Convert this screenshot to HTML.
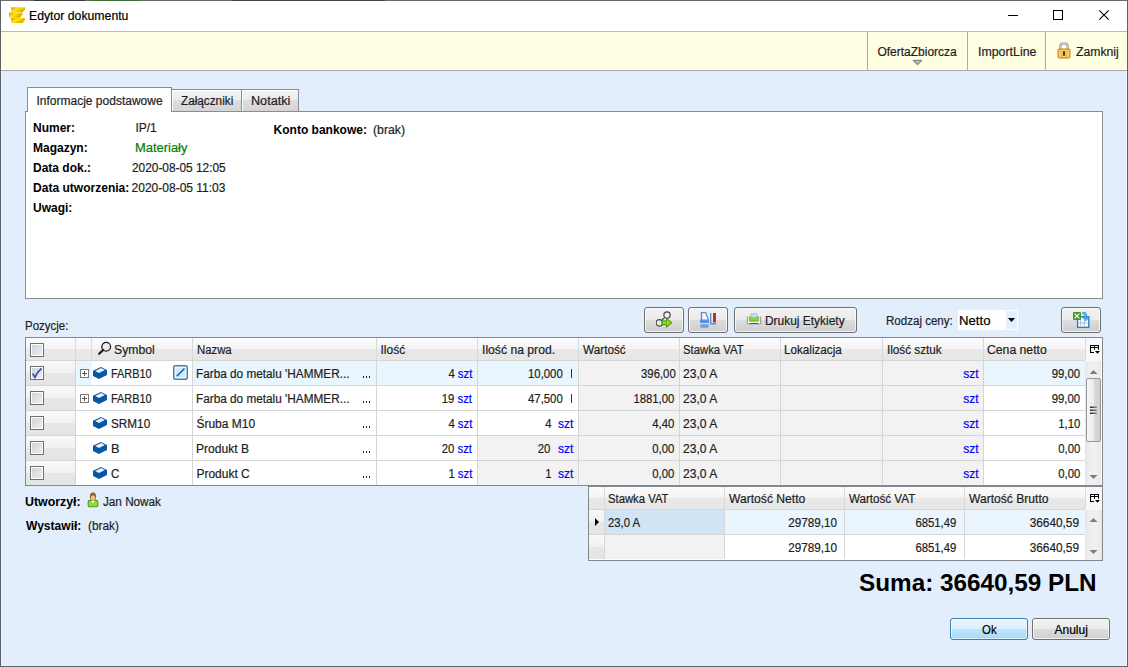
<!DOCTYPE html>
<html><head><meta charset="utf-8"><style>
html,body{margin:0;padding:0}
body{width:1128px;height:667px;overflow:hidden;position:relative;font-family:"Liberation Sans",sans-serif;font-size:12px}
.t{position:absolute;line-height:14px;white-space:nowrap;-webkit-text-stroke:0.2px currentColor}
.b{font-weight:bold;-webkit-text-stroke:0}
</style></head><body>
<div style="position:absolute;left:0px;top:0px;width:1128px;height:667px;background:#e3eefd"></div>
<div style="position:absolute;left:0px;top:1px;width:1128px;height:30px;background:#fff"></div>
<div style="position:absolute;left:0px;top:31px;width:1128px;height:1px;background:#b9b9b9"></div>
<div style="position:absolute;left:0px;top:32px;width:1128px;height:38px;background:#fefee3"></div>
<div style="position:absolute;left:0px;top:70px;width:1128px;height:1px;background:#aaaaaa"></div>
<div style="position:absolute;left:0px;top:0px;width:1128px;height:1px;background:#6a6a6a"></div>
<div style="position:absolute;left:34px;top:0px;width:51px;height:1px;background:#3a3a3a"></div>
<div style="position:absolute;left:90px;top:0px;width:50px;height:1px;background:#3f6f3f"></div>
<div style="position:absolute;left:232px;top:0px;width:153px;height:1px;background:#444"></div>
<div style="position:absolute;left:0px;top:0px;width:1px;height:667px;background:#5e6166"></div>
<div style="position:absolute;left:1127px;top:0px;width:1px;height:667px;background:#5e6166"></div>
<div style="position:absolute;left:0px;top:666px;width:1128px;height:1px;background:#5e6166"></div>
<div style="position:absolute;left:1126px;top:71px;width:1px;height:595px;background:#ecf4ff"></div>
<div style="position:absolute;left:1px;top:665px;width:1126px;height:1px;background:#ecf4ff"></div>
<svg style="position:absolute;left:9px;top:7px" width="16" height="16" viewBox="0 0 16 16">
<defs><linearGradient id="gc" x1="0" y1="0" x2="1" y2="0.6"><stop offset="0" stop-color="#d89600"/><stop offset="0.45" stop-color="#ffe800"/><stop offset="1" stop-color="#e0a000"/></linearGradient></defs>
<path d="M2 0.3 H16 V2.5 L13.5 5.3 H2.3 Z" fill="url(#gc)"/>
<path d="M0 5.5 H13.5 V7.3 L10.8 10.8 H0 Z" fill="url(#gc)"/>
<path d="M2 11 H16 V12.8 L13.5 16 H2.3 Z" fill="url(#gc)"/>
</svg>
<div class="t" id="t0" style="left:29.38px;top:9px;transform:scaleX(1.0208);transform-origin:0 0;color:#000">Edytor dokumentu</div>
<div style="position:absolute;left:1008px;top:15px;width:10px;height:1px;background:#000"></div>
<div style="position:absolute;left:1053px;top:10px;width:8px;height:8px;border:1px solid #000"></div>
<svg style="position:absolute;left:1098px;top:9px" width="12" height="12" viewBox="0 0 12 12"><path d="M1.3 1.3 L10.7 10.7 M10.7 1.3 L1.3 10.7" stroke="#000" stroke-width="1.1"/></svg>
<div style="position:absolute;left:867px;top:32px;width:1px;height:38px;background:#a9a9a9"></div>
<div style="position:absolute;left:967px;top:32px;width:1px;height:38px;background:#a9a9a9"></div>
<div style="position:absolute;left:1045px;top:32px;width:1px;height:38px;background:#a9a9a9"></div>
<div class="t" id="t1" style="left:877.40px;top:45px;color:#1e1e1e">OfertaZbiorcza</div>
<svg style="position:absolute;left:912px;top:59px" width="11" height="7" viewBox="0 0 11 7"><path d="M1.5 1.5 H9.5 L5.5 5.5 Z" fill="#d0d0d0" stroke="#8c8c8c" stroke-width="1.3" stroke-linejoin="round"/></svg>
<div class="t" id="t2" style="left:977.57px;top:45px;transform:scaleX(1.0309);transform-origin:0 0;color:#1e1e1e">ImportLine</div>
<svg style="position:absolute;left:1057px;top:42px" width="14" height="17" viewBox="0 0 14 17">
<path d="M3.3 7.5 V4.6 Q3.3 1.3 7 1.3 Q10.7 1.3 10.7 4.6 V7.5" fill="none" stroke="#9ca2ae" stroke-width="2.3"/>
<path d="M3.3 7.5 V4.6 Q3.3 1.3 7 1.3 Q10.7 1.3 10.7 4.6 V7.5" fill="none" stroke="#dde1e8" stroke-width="0.7"/>
<rect x="1" y="7" width="12" height="9" rx="1.2" fill="#f2b43a" stroke="#c98312" stroke-width="1"/>
<rect x="2.2" y="8.2" width="9.6" height="6.6" fill="#ffdc80"/>
<path d="M3 9.8 H5.8 M3 11.8 H5.8 M3 13.8 H5.8 M8.2 9.8 H11 M8.2 11.8 H11 M8.2 13.8 H11" stroke="#dc9a2a" stroke-width="0.9"/>
<rect x="6.1" y="9.2" width="1.8" height="4.6" fill="#3a2600"/>
</svg>
<div class="t" id="t3" style="left:1075.50px;top:45px;transform:scaleX(1.0171);transform-origin:0 0;color:#1e1e1e">Zamknij</div>
<div style="position:absolute;left:171px;top:89px;width:69px;height:21px;border:1px solid #898c95;border-bottom:none;box-shadow:inset 1px 1px 0 #fff;background:linear-gradient(#f3f3f3 0,#ebebeb 50%,#dddddd 50%,#d4d4d4 100%)"></div>
<div style="position:absolute;left:241px;top:89px;width:56px;height:21px;border:1px solid #898c95;border-bottom:none;box-shadow:inset 1px 1px 0 #fff;background:linear-gradient(#f3f3f3 0,#ebebeb 50%,#dddddd 50%,#d4d4d4 100%)"></div>
<div style="position:absolute;left:25px;top:111px;width:1076px;height:186px;border:1px solid #898c95;background:#fff"></div>
<div style="position:absolute;left:27px;top:87px;width:143px;height:24px;border:1px solid #898c95;border-bottom:none;background:#fff"></div>
<div class="t" id="t4" style="left:36.50px;top:94px;color:#1e1e1e">Informacje podstawowe</div>
<div class="t" id="t5" style="left:180.60px;top:94px;transform:scaleX(0.9792);transform-origin:0 0;color:#1e1e1e">Załączniki</div>
<div class="t" id="t6" style="left:250.75px;top:94px;transform:scaleX(1.0528);transform-origin:0 0;color:#1e1e1e">Notatki</div>
<div class="t" id="t7" style="left:33.00px;top:121px;font-weight:bold;color:#000;-webkit-text-stroke:0">Numer:</div>
<div class="t" id="t8" style="left:135.40px;top:121px;color:#1e1e1e">IP/1</div>
<div class="t" id="t9" style="left:33.00px;top:141px;font-weight:bold;color:#000;-webkit-text-stroke:0">Magazyn:</div>
<div class="t" id="t10" style="left:135.32px;top:141px;transform:scaleX(1.0766);transform-origin:0 0;color:#008000">Materiały</div>
<div class="t" id="t11" style="left:33.00px;top:161px;font-weight:bold;color:#000;-webkit-text-stroke:0">Data dok.:</div>
<div class="t" id="t12" style="left:131.61px;top:161px;transform:scaleX(0.9892);transform-origin:0 0;color:#1e1e1e">2020-08-05 12:05</div>
<div class="t" id="t13" style="left:33.00px;top:181px;transform:scaleX(1.0032);transform-origin:0 0;font-weight:bold;color:#000;-webkit-text-stroke:0">Data utworzenia:</div>
<div class="t" id="t14" style="left:131.60px;top:181px;color:#1e1e1e">2020-08-05 11:03</div>
<div class="t" id="t15" style="left:33.00px;top:201px;font-weight:bold;color:#000;-webkit-text-stroke:0">Uwagi:</div>
<div class="t" id="t16" style="left:273.60px;top:123px;font-weight:bold;color:#000;-webkit-text-stroke:0">Konto bankowe:</div>
<div class="t" id="t17" style="left:373.28px;top:123px;transform:scaleX(1.0241);transform-origin:0 0;color:#1e1e1e">(brak)</div>
<div style="position:absolute;left:644px;top:307px;width:40px;height:26px;box-sizing:border-box;border:1px solid #707070;border-radius:3px;background:linear-gradient(#f2f2f2 0,#ebebeb 50%,#dddddd 50%,#cfcfcf 100%);box-shadow:inset 0 0 0 1px rgba(255,255,255,0.7)"></div>
<div style="position:absolute;left:688px;top:307px;width:40px;height:26px;box-sizing:border-box;border:1px solid #707070;border-radius:3px;background:linear-gradient(#f2f2f2 0,#ebebeb 50%,#dddddd 50%,#cfcfcf 100%);box-shadow:inset 0 0 0 1px rgba(255,255,255,0.7)"></div>
<div style="position:absolute;left:734px;top:307px;width:123px;height:26px;box-sizing:border-box;border:1px solid #707070;border-radius:3px;background:linear-gradient(#f2f2f2 0,#ebebeb 50%,#dddddd 50%,#cfcfcf 100%);box-shadow:inset 0 0 0 1px rgba(255,255,255,0.7)"></div>
<div style="position:absolute;left:1061px;top:307px;width:40px;height:26px;box-sizing:border-box;border:1px solid #707070;border-radius:3px;background:linear-gradient(#f2f2f2 0,#ebebeb 50%,#dddddd 50%,#cfcfcf 100%);box-shadow:inset 0 0 0 1px rgba(255,255,255,0.7)"></div>
<svg style="position:absolute;left:656px;top:311px" width="17" height="17" viewBox="0 0 17 17">
<circle cx="11" cy="4.1" r="3.2" fill="#e4e4e4" stroke="#4a4a4a" stroke-width="1.2"/>
<path d="M9.6 2.8 L12.4 5.4 M12.4 2.8 L9.6 5.4" stroke="#fff" stroke-width="0.9"/>
<circle cx="3.3" cy="11.9" r="3.2" fill="#e4e4e4" stroke="#4a4a4a" stroke-width="1.2"/>
<path d="M2.2 10.6 V13.2 M4.4 10.6 V13.2" stroke="#fff" stroke-width="0.9"/>
<path d="M5.5 9.5 L8.8 6.4" stroke="#4a4a4a" stroke-width="1.2"/>
<path d="M6 10 H10.5 V7.2 L16 11.8 L10.5 16.2 V13.6 H6 Z" fill="#8ad21e" stroke="#3c8c00" stroke-width="0.9" stroke-linejoin="round"/>
</svg>
<svg style="position:absolute;left:700px;top:312px" width="17" height="16" viewBox="0 0 17 16">
<path d="M0.8 0 H6.2 L9 7.6 V11 H0 V7.5 H0.8 Z" fill="#5f8fd8"/>
<path d="M2.2 1.2 H5.3 L7.7 7.5 H2.2 Z" fill="#f4f7fc"/>
<rect x="0" y="12.2" width="9" height="3.6" rx="1.8" fill="#6d9ce0"/>
<path d="M10.7 1 V11.9 H16" fill="none" stroke="#4f7fd0" stroke-width="1.2"/>
<rect x="13" y="1" width="3" height="9.4" fill="#c0302a"/>
</svg>
<svg style="position:absolute;left:746px;top:313px" width="16" height="14" viewBox="0 0 16 14">
<path d="M1.3 3.5 V11 H14.7 V3.5" fill="#f8f8f8" stroke="#8a8a8a" stroke-width="0.9"/>
<rect x="2.8" y="3" width="10.4" height="5.8" rx="1.6" fill="#7cc22a"/>
<rect x="3.5" y="5.5" width="9" height="1" fill="#a6dc54"/>
<rect x="5" y="0" width="6" height="4.6" fill="#bcdcfa" stroke="#8fb6e6" stroke-width="0.6"/>
<rect x="4.5" y="10.3" width="7" height="3" fill="#bcdcfa"/>
<rect x="4" y="10.2" width="8" height="0.9" fill="#333"/>
</svg>
<div class="t" id="t18" style="left:765.01px;top:314px;transform:scaleX(0.9949);transform-origin:0 0;color:#1e1e1e">Drukuj Etykiety</div>
<div class="t" id="t19" style="left:885.64px;top:314px;transform:scaleX(0.9627);transform-origin:0 0;color:#1e1e1e">Rodzaj ceny:</div>
<div style="position:absolute;left:958px;top:310px;width:60px;height:20px;background:#fff"></div>
<div style="position:absolute;left:1006px;top:311px;width:11px;height:18px;background:#e3eefd"></div>
<svg style="position:absolute;left:1008px;top:318px" width="7" height="4" viewBox="0 0 7 4"><path d="M0 0 H7 L3.5 4 Z" fill="#000"/></svg>
<div class="t" id="t20" style="left:959.40px;top:314px;transform:scaleX(1.0963);transform-origin:0 0;color:#000">Netto</div>
<svg style="position:absolute;left:1072px;top:311px" width="18" height="17" viewBox="0 0 18 17">
<rect x="5.6" y="5.7" width="11.2" height="10.6" fill="#fff" stroke="#1f7ac8" stroke-width="1.3"/>
<path d="M8.8 9 V15 M12.3 9 V15 M7 12 H15.5" stroke="#8fbbe8" stroke-width="1"/>
<rect x="1" y="1" width="8" height="8" rx="0.8" fill="#3e9a2a"/>
<path d="M2.6 2.6 L7.4 7.4 M7.4 2.6 L2.6 7.4" stroke="#fff" stroke-width="1.2"/>
<path d="M10.3 2 Q13.8 1.8 13.8 4.8 V6.8" fill="none" stroke="#2d82c8" stroke-width="2.6"/>
<path d="M10.3 2 Q13.8 1.8 13.8 4.8 V6.8" fill="none" stroke="#6cbcf0" stroke-width="1.3"/>
<path d="M10.2 6.2 H17.4 L13.8 10 Z" fill="#5aaeea" stroke="#2d82c8" stroke-width="0.6"/>
</svg>
<div class="t" id="t21" style="left:24.64px;top:319px;transform:scaleX(0.9558);transform-origin:0 0;color:#1e1e1e">Pozycje:</div>
<div style="position:absolute;left:25px;top:337px;width:1078px;height:149px;background:#fff;box-sizing:border-box;border:1px solid #828790"></div>
<div style="position:absolute;left:26px;top:338px;width:1059px;height:22px;background:linear-gradient(#fbfbfb 0,#f4f4f4 50%,#e9e9e9 50%,#e6e6e6 100%)"></div>
<div style="position:absolute;left:1085px;top:338px;width:16px;height:23px;background:#f8f8f8"></div>
<div style="position:absolute;left:26px;top:360px;width:1059px;height:1px;background:#d5d5d5"></div>
<div style="position:absolute;left:75px;top:338px;width:1px;height:22px;background:#dadada"></div>
<div style="position:absolute;left:91px;top:338px;width:1px;height:22px;background:#dadada"></div>
<div style="position:absolute;left:192px;top:338px;width:1px;height:22px;background:#dadada"></div>
<div style="position:absolute;left:376px;top:338px;width:1px;height:22px;background:#dadada"></div>
<div style="position:absolute;left:477px;top:338px;width:1px;height:22px;background:#dadada"></div>
<div style="position:absolute;left:578px;top:338px;width:1px;height:22px;background:#dadada"></div>
<div style="position:absolute;left:679px;top:338px;width:1px;height:22px;background:#dadada"></div>
<div style="position:absolute;left:780px;top:338px;width:1px;height:22px;background:#dadada"></div>
<div style="position:absolute;left:882px;top:338px;width:1px;height:22px;background:#dadada"></div>
<div style="position:absolute;left:983px;top:338px;width:1px;height:22px;background:#dadada"></div>
<div style="position:absolute;left:1085px;top:338px;width:1px;height:22px;background:#dadada"></div>
<svg style="position:absolute;left:97px;top:341px" width="16" height="16" viewBox="0 0 16 16"><circle cx="9.2" cy="5.7" r="4.4" fill="#ececec" stroke="#1e1e1e" stroke-width="1.3"/><path d="M6.1 9 L2.2 12.8" stroke="#1e1e1e" stroke-width="2.3" stroke-linecap="round"/></svg>
<div class="t" id="t22" style="left:114.38px;top:343px;transform:scaleX(1.0158);transform-origin:0 0;color:#1e1e1e">Symbol</div>
<div class="t" id="t23" style="left:196.66px;top:343px;transform:scaleX(0.9444);transform-origin:0 0;color:#1e1e1e">Nazwa</div>
<div class="t" id="t24" style="left:380.50px;top:343px;color:#1e1e1e">Ilość</div>
<div class="t" id="t25" style="left:481.59px;top:343px;transform:scaleX(1.0143);transform-origin:0 0;color:#1e1e1e">Ilość na prod.</div>
<div class="t" id="t26" style="left:583.30px;top:343px;transform:scaleX(0.9814);transform-origin:0 0;color:#1e1e1e">Wartość</div>
<div class="t" id="t27" style="left:683.26px;top:343px;transform:scaleX(0.9429);transform-origin:0 0;color:#1e1e1e">Stawka VAT</div>
<div class="t" id="t28" style="left:784.33px;top:343px;transform:scaleX(0.9724);transform-origin:0 0;color:#1e1e1e">Lokalizacja</div>
<div class="t" id="t29" style="left:886.72px;top:343px;transform:scaleX(0.9764);transform-origin:0 0;color:#1e1e1e">Ilość sztuk</div>
<div class="t" id="t30" style="left:986.98px;top:343px;transform:scaleX(1.0175);transform-origin:0 0;color:#1e1e1e">Cena netto</div>
<svg style="position:absolute;left:1089px;top:344px" width="12" height="11" viewBox="0 0 12 11"><path d="M1 1.5 H10 M1 3.5 H10 M1.5 1 V9 M1 8.5 H5 M5.5 1 V5.8 M9.5 1 V5.8" fill="none" stroke="#000" stroke-width="1"/><path d="M6 7 H11 L8.5 9.8 Z" fill="#000"/></svg>
<div style="position:absolute;left:30px;top:343px;width:12px;height:12px;border:1px solid #707070;box-shadow:inset 0 0 0 1px #fff;background:linear-gradient(135deg,#cdd1d6 0,#eef0f2 100%)"></div>
<div style="position:absolute;left:26px;top:361px;width:49px;height:24px;background:linear-gradient(#f9f9f9 0,#f1f1f1 50%,#e7e7e7 50%,#e4e4e4 100%)"></div>
<div style="position:absolute;left:76px;top:361px;width:16px;height:24px;background:#eaf6fd"></div>
<div style="position:absolute;left:92px;top:361px;width:100px;height:24px;background:#fff"></div>
<div style="position:absolute;left:193px;top:361px;width:183px;height:24px;background:#eaf6fd"></div>
<div style="position:absolute;left:377px;top:361px;width:100px;height:24px;background:#eaf6fd"></div>
<div style="position:absolute;left:478px;top:361px;width:100px;height:24px;background:#eaf6fd"></div>
<div style="position:absolute;left:579px;top:361px;width:100px;height:24px;background:#f2f2f2"></div>
<div style="position:absolute;left:680px;top:361px;width:100px;height:24px;background:#f2f2f2"></div>
<div style="position:absolute;left:781px;top:361px;width:101px;height:24px;background:#f2f2f2"></div>
<div style="position:absolute;left:883px;top:361px;width:100px;height:24px;background:#f2f2f2"></div>
<div style="position:absolute;left:984px;top:361px;width:101px;height:24px;background:#eaf6fd"></div>
<div style="position:absolute;left:75px;top:361px;width:1px;height:24px;background:#d5d5d5"></div>
<div style="position:absolute;left:192px;top:361px;width:1px;height:24px;background:#d5d5d5"></div>
<div style="position:absolute;left:376px;top:361px;width:1px;height:24px;background:#d5d5d5"></div>
<div style="position:absolute;left:477px;top:361px;width:1px;height:24px;background:#d5d5d5"></div>
<div style="position:absolute;left:578px;top:361px;width:1px;height:24px;background:#d5d5d5"></div>
<div style="position:absolute;left:679px;top:361px;width:1px;height:24px;background:#d5d5d5"></div>
<div style="position:absolute;left:780px;top:361px;width:1px;height:24px;background:#d5d5d5"></div>
<div style="position:absolute;left:882px;top:361px;width:1px;height:24px;background:#d5d5d5"></div>
<div style="position:absolute;left:983px;top:361px;width:1px;height:24px;background:#d5d5d5"></div>
<div style="position:absolute;left:26px;top:385px;width:1059px;height:1px;background:#d5d5d5"></div>
<div style="position:absolute;left:30px;top:366px;width:12px;height:12px;border:1px solid #707070;box-shadow:inset 0 0 0 1px #fff;background:linear-gradient(135deg,#cdd1d6 0,#eef0f2 100%)"></div>
<svg style="position:absolute;left:30px;top:366px" width="14" height="14" viewBox="0 0 14 14"><path d="M2.6 7.6 Q3.8 8.8 4.9 11.3 Q7.5 5.5 11.6 2.3" fill="none" stroke="#3a50a4" stroke-width="1.7"/></svg>
<svg style="position:absolute;left:80px;top:369px" width="9" height="9" viewBox="0 0 9 9"><rect x="0.5" y="0.5" width="8" height="8" fill="#fff" stroke="#7a7a7a"/><path d="M2 4.5 H7 M4.5 2 V7" stroke="#5a5a5a" stroke-width="1"/></svg>
<svg style="position:absolute;left:93px;top:367px" width="15" height="13" viewBox="0 0 15 13"><path d="M0 3.7 L7.9 0 L14 2.9 V7.9 L5.9 12 L0 8.9 Z" fill="#0756a8"/><path d="M2.1 4.1 L8.1 1.1 L11.9 2.9 L6 6.1 Z" fill="#f1f1f1"/></svg>
<div class="t" id="t31" style="left:111.39px;top:367px;transform:scaleX(0.9093);transform-origin:0 0;color:#1e1e1e">FARB10</div>
<svg style="position:absolute;left:173px;top:365px" width="15" height="15" viewBox="0 0 15 15"><rect x="0.75" y="0.75" width="13.5" height="13.5" rx="1.5" fill="#fff" stroke="#3b80c4" stroke-width="1.5"/><rect x="2.5" y="2.5" width="10" height="10" fill="#d3e9fb"/><path d="M3.8 11.2 L11.5 3.5" stroke="#1f67b0" stroke-width="1.7"/></svg>
<div class="t" id="t32" style="left:196.42px;top:367px;transform:scaleX(0.9818);transform-origin:0 0;color:#1e1e1e">Farba do metalu 'HAMMER...</div>
<div style="position:absolute;left:362.5px;top:376px;width:1.5px;height:2px;background:#1e1e1e"></div>
<div style="position:absolute;left:365.5px;top:376px;width:1.5px;height:2px;background:#1e1e1e"></div>
<div style="position:absolute;left:368.5px;top:376px;width:1.5px;height:2px;background:#1e1e1e"></div>
<div class="t" id="t33" style="right:655.60px;top:367px;transform:scaleX(0.9450);transform-origin:100% 0;color:#1e1e1e">4 <span style="color:#0000ff">szt</span></div>
<div class="t" id="t34" style="right:565.00px;top:367px;transform:scaleX(0.9450);transform-origin:100% 0;color:#1e1e1e">10,000</div>
<div style="position:absolute;left:571px;top:369px;width:1.3px;height:9px;background:#3a10f0"></div>
<div class="t" id="t35" style="right:452.70px;top:367px;transform:scaleX(0.9450);transform-origin:100% 0;color:#1e1e1e">396,00</div>
<div class="t" id="t36" style="left:683.19px;top:367px;transform:scaleX(1.0061);transform-origin:0 0;color:#1e1e1e">23,0 A</div>
<div class="t" id="t37" style="right:149.40px;top:367px;color:#0000ff">szt</div>
<div class="t" id="t38" style="right:47.60px;top:367px;transform:scaleX(0.9450);transform-origin:100% 0;color:#1e1e1e">99,00</div>
<div style="position:absolute;left:26px;top:386px;width:49px;height:24px;background:linear-gradient(#f9f9f9 0,#f1f1f1 50%,#e7e7e7 50%,#e4e4e4 100%)"></div>
<div style="position:absolute;left:76px;top:386px;width:16px;height:24px;background:#fff"></div>
<div style="position:absolute;left:92px;top:386px;width:100px;height:24px;background:#fff"></div>
<div style="position:absolute;left:193px;top:386px;width:183px;height:24px;background:#fff"></div>
<div style="position:absolute;left:377px;top:386px;width:100px;height:24px;background:#fff"></div>
<div style="position:absolute;left:478px;top:386px;width:100px;height:24px;background:#fff"></div>
<div style="position:absolute;left:579px;top:386px;width:100px;height:24px;background:#f2f2f2"></div>
<div style="position:absolute;left:680px;top:386px;width:100px;height:24px;background:#f2f2f2"></div>
<div style="position:absolute;left:781px;top:386px;width:101px;height:24px;background:#f2f2f2"></div>
<div style="position:absolute;left:883px;top:386px;width:100px;height:24px;background:#f2f2f2"></div>
<div style="position:absolute;left:984px;top:386px;width:101px;height:24px;background:#fff"></div>
<div style="position:absolute;left:75px;top:386px;width:1px;height:24px;background:#d5d5d5"></div>
<div style="position:absolute;left:192px;top:386px;width:1px;height:24px;background:#d5d5d5"></div>
<div style="position:absolute;left:376px;top:386px;width:1px;height:24px;background:#d5d5d5"></div>
<div style="position:absolute;left:477px;top:386px;width:1px;height:24px;background:#d5d5d5"></div>
<div style="position:absolute;left:578px;top:386px;width:1px;height:24px;background:#d5d5d5"></div>
<div style="position:absolute;left:679px;top:386px;width:1px;height:24px;background:#d5d5d5"></div>
<div style="position:absolute;left:780px;top:386px;width:1px;height:24px;background:#d5d5d5"></div>
<div style="position:absolute;left:882px;top:386px;width:1px;height:24px;background:#d5d5d5"></div>
<div style="position:absolute;left:983px;top:386px;width:1px;height:24px;background:#d5d5d5"></div>
<div style="position:absolute;left:26px;top:410px;width:1059px;height:1px;background:#d5d5d5"></div>
<div style="position:absolute;left:30px;top:391px;width:12px;height:12px;border:1px solid #707070;box-shadow:inset 0 0 0 1px #fff;background:linear-gradient(135deg,#cdd1d6 0,#eef0f2 100%)"></div>
<svg style="position:absolute;left:80px;top:394px" width="9" height="9" viewBox="0 0 9 9"><rect x="0.5" y="0.5" width="8" height="8" fill="#fff" stroke="#7a7a7a"/><path d="M2 4.5 H7 M4.5 2 V7" stroke="#5a5a5a" stroke-width="1"/></svg>
<svg style="position:absolute;left:93px;top:392px" width="15" height="13" viewBox="0 0 15 13"><path d="M0 3.7 L7.9 0 L14 2.9 V7.9 L5.9 12 L0 8.9 Z" fill="#0756a8"/><path d="M2.1 4.1 L8.1 1.1 L11.9 2.9 L6 6.1 Z" fill="#f1f1f1"/></svg>
<div class="t" id="t39" style="left:111.39px;top:392px;transform:scaleX(0.9093);transform-origin:0 0;color:#1e1e1e">FARB10</div>
<div class="t" id="t40" style="left:196.42px;top:392px;transform:scaleX(0.9818);transform-origin:0 0;color:#1e1e1e">Farba do metalu 'HAMMER...</div>
<div style="position:absolute;left:362.5px;top:401px;width:1.5px;height:2px;background:#1e1e1e"></div>
<div style="position:absolute;left:365.5px;top:401px;width:1.5px;height:2px;background:#1e1e1e"></div>
<div style="position:absolute;left:368.5px;top:401px;width:1.5px;height:2px;background:#1e1e1e"></div>
<div class="t" id="t41" style="right:655.60px;top:392px;transform:scaleX(0.9450);transform-origin:100% 0;color:#1e1e1e">19 <span style="color:#0000ff">szt</span></div>
<div class="t" id="t42" style="right:565.00px;top:392px;transform:scaleX(0.9450);transform-origin:100% 0;color:#1e1e1e">47,500</div>
<div style="position:absolute;left:571px;top:394px;width:1.3px;height:9px;background:#3a10f0"></div>
<div class="t" id="t43" style="right:453.70px;top:392px;transform:scaleX(0.9450);transform-origin:100% 0;color:#1e1e1e">1881,00</div>
<div class="t" id="t44" style="left:683.19px;top:392px;transform:scaleX(1.0061);transform-origin:0 0;color:#1e1e1e">23,0 A</div>
<div class="t" id="t45" style="right:149.40px;top:392px;color:#0000ff">szt</div>
<div class="t" id="t46" style="right:47.60px;top:392px;transform:scaleX(0.9450);transform-origin:100% 0;color:#1e1e1e">99,00</div>
<div style="position:absolute;left:26px;top:411px;width:49px;height:24px;background:linear-gradient(#f9f9f9 0,#f1f1f1 50%,#e7e7e7 50%,#e4e4e4 100%)"></div>
<div style="position:absolute;left:76px;top:411px;width:16px;height:24px;background:#fff"></div>
<div style="position:absolute;left:92px;top:411px;width:100px;height:24px;background:#fff"></div>
<div style="position:absolute;left:193px;top:411px;width:183px;height:24px;background:#fff"></div>
<div style="position:absolute;left:377px;top:411px;width:100px;height:24px;background:#fff"></div>
<div style="position:absolute;left:478px;top:411px;width:100px;height:24px;background:#fff"></div>
<div style="position:absolute;left:579px;top:411px;width:100px;height:24px;background:#f2f2f2"></div>
<div style="position:absolute;left:680px;top:411px;width:100px;height:24px;background:#f2f2f2"></div>
<div style="position:absolute;left:781px;top:411px;width:101px;height:24px;background:#f2f2f2"></div>
<div style="position:absolute;left:883px;top:411px;width:100px;height:24px;background:#f2f2f2"></div>
<div style="position:absolute;left:984px;top:411px;width:101px;height:24px;background:#fff"></div>
<div style="position:absolute;left:75px;top:411px;width:1px;height:24px;background:#d5d5d5"></div>
<div style="position:absolute;left:192px;top:411px;width:1px;height:24px;background:#d5d5d5"></div>
<div style="position:absolute;left:376px;top:411px;width:1px;height:24px;background:#d5d5d5"></div>
<div style="position:absolute;left:477px;top:411px;width:1px;height:24px;background:#d5d5d5"></div>
<div style="position:absolute;left:578px;top:411px;width:1px;height:24px;background:#d5d5d5"></div>
<div style="position:absolute;left:679px;top:411px;width:1px;height:24px;background:#d5d5d5"></div>
<div style="position:absolute;left:780px;top:411px;width:1px;height:24px;background:#d5d5d5"></div>
<div style="position:absolute;left:882px;top:411px;width:1px;height:24px;background:#d5d5d5"></div>
<div style="position:absolute;left:983px;top:411px;width:1px;height:24px;background:#d5d5d5"></div>
<div style="position:absolute;left:26px;top:435px;width:1059px;height:1px;background:#d5d5d5"></div>
<div style="position:absolute;left:30px;top:416px;width:12px;height:12px;border:1px solid #707070;box-shadow:inset 0 0 0 1px #fff;background:linear-gradient(135deg,#cdd1d6 0,#eef0f2 100%)"></div>
<svg style="position:absolute;left:93px;top:417px" width="15" height="13" viewBox="0 0 15 13"><path d="M0 3.7 L7.9 0 L14 2.9 V7.9 L5.9 12 L0 8.9 Z" fill="#0756a8"/><path d="M2.1 4.1 L8.1 1.1 L11.9 2.9 L6 6.1 Z" fill="#f1f1f1"/></svg>
<div class="t" id="t47" style="left:111.32px;top:417px;transform:scaleX(0.9789);transform-origin:0 0;color:#1e1e1e">SRM10</div>
<div class="t" id="t48" style="left:196.40px;top:417px;color:#1e1e1e">Śruba M10</div>
<div style="position:absolute;left:362.5px;top:426px;width:1.5px;height:2px;background:#1e1e1e"></div>
<div style="position:absolute;left:365.5px;top:426px;width:1.5px;height:2px;background:#1e1e1e"></div>
<div style="position:absolute;left:368.5px;top:426px;width:1.5px;height:2px;background:#1e1e1e"></div>
<div class="t" id="t49" style="right:655.60px;top:417px;transform:scaleX(0.9450);transform-origin:100% 0;color:#1e1e1e">4 <span style="color:#0000ff">szt</span></div>
<div class="t" id="t50" style="right:576.50px;top:417px;transform:scaleX(0.9450);transform-origin:100% 0;color:#1e1e1e">4</div>
<div class="t" id="t51" style="right:554.60px;top:417px;color:#0000ff">szt</div>
<div class="t" id="t52" style="right:453.70px;top:417px;transform:scaleX(0.9450);transform-origin:100% 0;color:#1e1e1e">4,40</div>
<div class="t" id="t53" style="left:683.19px;top:417px;transform:scaleX(1.0061);transform-origin:0 0;color:#1e1e1e">23,0 A</div>
<div class="t" id="t54" style="right:149.40px;top:417px;color:#0000ff">szt</div>
<div class="t" id="t55" style="right:47.60px;top:417px;transform:scaleX(0.9450);transform-origin:100% 0;color:#1e1e1e">1,10</div>
<div style="position:absolute;left:26px;top:436px;width:49px;height:24px;background:linear-gradient(#f9f9f9 0,#f1f1f1 50%,#e7e7e7 50%,#e4e4e4 100%)"></div>
<div style="position:absolute;left:76px;top:436px;width:16px;height:24px;background:#fff"></div>
<div style="position:absolute;left:92px;top:436px;width:100px;height:24px;background:#fff"></div>
<div style="position:absolute;left:193px;top:436px;width:183px;height:24px;background:#fff"></div>
<div style="position:absolute;left:377px;top:436px;width:100px;height:24px;background:#fff"></div>
<div style="position:absolute;left:478px;top:436px;width:100px;height:24px;background:#f2f2f2"></div>
<div style="position:absolute;left:579px;top:436px;width:100px;height:24px;background:#f2f2f2"></div>
<div style="position:absolute;left:680px;top:436px;width:100px;height:24px;background:#f2f2f2"></div>
<div style="position:absolute;left:781px;top:436px;width:101px;height:24px;background:#f2f2f2"></div>
<div style="position:absolute;left:883px;top:436px;width:100px;height:24px;background:#f2f2f2"></div>
<div style="position:absolute;left:984px;top:436px;width:101px;height:24px;background:#fff"></div>
<div style="position:absolute;left:75px;top:436px;width:1px;height:24px;background:#d5d5d5"></div>
<div style="position:absolute;left:192px;top:436px;width:1px;height:24px;background:#d5d5d5"></div>
<div style="position:absolute;left:376px;top:436px;width:1px;height:24px;background:#d5d5d5"></div>
<div style="position:absolute;left:477px;top:436px;width:1px;height:24px;background:#d5d5d5"></div>
<div style="position:absolute;left:578px;top:436px;width:1px;height:24px;background:#d5d5d5"></div>
<div style="position:absolute;left:679px;top:436px;width:1px;height:24px;background:#d5d5d5"></div>
<div style="position:absolute;left:780px;top:436px;width:1px;height:24px;background:#d5d5d5"></div>
<div style="position:absolute;left:882px;top:436px;width:1px;height:24px;background:#d5d5d5"></div>
<div style="position:absolute;left:983px;top:436px;width:1px;height:24px;background:#d5d5d5"></div>
<div style="position:absolute;left:26px;top:460px;width:1059px;height:1px;background:#d5d5d5"></div>
<div style="position:absolute;left:30px;top:441px;width:12px;height:12px;border:1px solid #707070;box-shadow:inset 0 0 0 1px #fff;background:linear-gradient(135deg,#cdd1d6 0,#eef0f2 100%)"></div>
<svg style="position:absolute;left:93px;top:442px" width="15" height="13" viewBox="0 0 15 13"><path d="M0 3.7 L7.9 0 L14 2.9 V7.9 L5.9 12 L0 8.9 Z" fill="#0756a8"/><path d="M2.1 4.1 L8.1 1.1 L11.9 2.9 L6 6.1 Z" fill="#f1f1f1"/></svg>
<div class="t" id="t56" style="left:111.23px;top:442px;transform:scaleX(1.0667);transform-origin:0 0;color:#1e1e1e">B</div>
<div class="t" id="t57" style="left:196.39px;top:442px;transform:scaleX(1.0059);transform-origin:0 0;color:#1e1e1e">Produkt B</div>
<div style="position:absolute;left:362.5px;top:451px;width:1.5px;height:2px;background:#1e1e1e"></div>
<div style="position:absolute;left:365.5px;top:451px;width:1.5px;height:2px;background:#1e1e1e"></div>
<div style="position:absolute;left:368.5px;top:451px;width:1.5px;height:2px;background:#1e1e1e"></div>
<div class="t" id="t58" style="right:655.60px;top:442px;transform:scaleX(0.9450);transform-origin:100% 0;color:#1e1e1e">20 <span style="color:#0000ff">szt</span></div>
<div class="t" id="t59" style="right:577.50px;top:442px;transform:scaleX(0.9450);transform-origin:100% 0;color:#1e1e1e">20</div>
<div class="t" id="t60" style="right:554.60px;top:442px;color:#0000ff">szt</div>
<div class="t" id="t61" style="right:453.70px;top:442px;transform:scaleX(0.9450);transform-origin:100% 0;color:#1e1e1e">0,00</div>
<div class="t" id="t62" style="left:683.19px;top:442px;transform:scaleX(1.0061);transform-origin:0 0;color:#1e1e1e">23,0 A</div>
<div class="t" id="t63" style="right:149.40px;top:442px;color:#0000ff">szt</div>
<div class="t" id="t64" style="right:47.60px;top:442px;transform:scaleX(0.9450);transform-origin:100% 0;color:#1e1e1e">0,00</div>
<div style="position:absolute;left:26px;top:461px;width:49px;height:24px;background:linear-gradient(#f9f9f9 0,#f1f1f1 50%,#e7e7e7 50%,#e4e4e4 100%)"></div>
<div style="position:absolute;left:76px;top:461px;width:16px;height:24px;background:#fff"></div>
<div style="position:absolute;left:92px;top:461px;width:100px;height:24px;background:#fff"></div>
<div style="position:absolute;left:193px;top:461px;width:183px;height:24px;background:#fff"></div>
<div style="position:absolute;left:377px;top:461px;width:100px;height:24px;background:#fff"></div>
<div style="position:absolute;left:478px;top:461px;width:100px;height:24px;background:#f2f2f2"></div>
<div style="position:absolute;left:579px;top:461px;width:100px;height:24px;background:#f2f2f2"></div>
<div style="position:absolute;left:680px;top:461px;width:100px;height:24px;background:#f2f2f2"></div>
<div style="position:absolute;left:781px;top:461px;width:101px;height:24px;background:#f2f2f2"></div>
<div style="position:absolute;left:883px;top:461px;width:100px;height:24px;background:#f2f2f2"></div>
<div style="position:absolute;left:984px;top:461px;width:101px;height:24px;background:#fff"></div>
<div style="position:absolute;left:75px;top:461px;width:1px;height:24px;background:#d5d5d5"></div>
<div style="position:absolute;left:192px;top:461px;width:1px;height:24px;background:#d5d5d5"></div>
<div style="position:absolute;left:376px;top:461px;width:1px;height:24px;background:#d5d5d5"></div>
<div style="position:absolute;left:477px;top:461px;width:1px;height:24px;background:#d5d5d5"></div>
<div style="position:absolute;left:578px;top:461px;width:1px;height:24px;background:#d5d5d5"></div>
<div style="position:absolute;left:679px;top:461px;width:1px;height:24px;background:#d5d5d5"></div>
<div style="position:absolute;left:780px;top:461px;width:1px;height:24px;background:#d5d5d5"></div>
<div style="position:absolute;left:882px;top:461px;width:1px;height:24px;background:#d5d5d5"></div>
<div style="position:absolute;left:983px;top:461px;width:1px;height:24px;background:#d5d5d5"></div>
<div style="position:absolute;left:30px;top:466px;width:12px;height:12px;border:1px solid #707070;box-shadow:inset 0 0 0 1px #fff;background:linear-gradient(135deg,#cdd1d6 0,#eef0f2 100%)"></div>
<svg style="position:absolute;left:93px;top:467px" width="15" height="13" viewBox="0 0 15 13"><path d="M0 3.7 L7.9 0 L14 2.9 V7.9 L5.9 12 L0 8.9 Z" fill="#0756a8"/><path d="M2.1 4.1 L8.1 1.1 L11.9 2.9 L6 6.1 Z" fill="#f1f1f1"/></svg>
<div class="t" id="t65" style="left:111.34px;top:467px;transform:scaleX(0.9571);transform-origin:0 0;color:#1e1e1e">C</div>
<div class="t" id="t66" style="left:196.40px;top:467px;color:#1e1e1e">Produkt C</div>
<div style="position:absolute;left:362.5px;top:476px;width:1.5px;height:2px;background:#1e1e1e"></div>
<div style="position:absolute;left:365.5px;top:476px;width:1.5px;height:2px;background:#1e1e1e"></div>
<div style="position:absolute;left:368.5px;top:476px;width:1.5px;height:2px;background:#1e1e1e"></div>
<div class="t" id="t67" style="right:655.60px;top:467px;transform:scaleX(0.9450);transform-origin:100% 0;color:#1e1e1e">1 <span style="color:#0000ff">szt</span></div>
<div class="t" id="t68" style="right:576.50px;top:467px;transform:scaleX(0.9450);transform-origin:100% 0;color:#1e1e1e">1</div>
<div class="t" id="t69" style="right:554.60px;top:467px;color:#0000ff">szt</div>
<div class="t" id="t70" style="right:453.70px;top:467px;transform:scaleX(0.9450);transform-origin:100% 0;color:#1e1e1e">0,00</div>
<div class="t" id="t71" style="left:683.19px;top:467px;transform:scaleX(1.0061);transform-origin:0 0;color:#1e1e1e">23,0 A</div>
<div class="t" id="t72" style="right:149.40px;top:467px;color:#0000ff">szt</div>
<div class="t" id="t73" style="right:47.60px;top:467px;transform:scaleX(0.9450);transform-origin:100% 0;color:#1e1e1e">0,00</div>
<div style="position:absolute;left:1085px;top:361px;width:16px;height:124px;background:linear-gradient(90deg,#e6e6e6 0,#efefef 30%,#f0f0f0 70%,#e8e8e8 100%)"></div>
<svg style="position:absolute;left:1089px;top:369px" width="9" height="6" viewBox="0 0 9 6"><path d="M0.5 5 L4.5 1 L8.5 5 Z" fill="#7d7d7d"/></svg>
<svg style="position:absolute;left:1089px;top:474px" width="9" height="6" viewBox="0 0 9 6"><path d="M0.5 1 L4.5 5 L8.5 1 Z" fill="#7d7d7d"/></svg>
<div style="position:absolute;left:1086px;top:378px;width:13px;height:62px;border:1px solid #979797;border-radius:2px;background:linear-gradient(90deg,#f6f6f6 0,#ececec 50%,#d8d8d8 51%,#d0d0d0 100%)"></div>
<svg style="position:absolute;left:1089px;top:405px" width="9" height="10" viewBox="0 0 9 10"><defs><linearGradient id="gg"><stop offset="0" stop-color="#222"/><stop offset="1" stop-color="#999"/></linearGradient></defs><path d="M1 2.2 H8 M1 5.2 H8 M1 8.2 H8" stroke="url(#gg)" stroke-width="1.4"/></svg>
<div class="t" id="t74" style="left:24.57px;top:495px;transform:scaleX(1.0308);transform-origin:0 0;font-weight:bold;color:#000;-webkit-text-stroke:0">Utworzył:</div>
<svg style="position:absolute;left:87px;top:492px" width="12" height="16" viewBox="0 0 12 16">
<ellipse cx="6" cy="4.4" rx="3.1" ry="3.9" fill="#9a5e22"/>
<ellipse cx="6" cy="5.9" rx="2.2" ry="2.6" fill="#f0c888"/>
<rect x="1.2" y="8.4" width="9.6" height="6.4" rx="1.6" fill="#98d83c" stroke="#4a9a14" stroke-width="1.1"/>
<path d="M4.2 8.4 L6 11.2 L7.8 8.4 Z" fill="#fff"/>
</svg>
<div class="t" id="t75" style="left:103.10px;top:495px;transform:scaleX(0.9763);transform-origin:0 0;color:#1e1e1e">Jan Nowak</div>
<div class="t" id="t76" style="left:25.60px;top:519px;transform:scaleX(1.0037);transform-origin:0 0;font-weight:bold;color:#000;-webkit-text-stroke:0">Wystawił:</div>
<div class="t" id="t77" style="left:87.51px;top:519px;transform:scaleX(0.9867);transform-origin:0 0;color:#1e1e1e">(brak)</div>
<div style="position:absolute;left:588px;top:486px;width:515px;height:75px;box-sizing:border-box;border:1px solid #828790;background:#fff"></div>
<div style="position:absolute;left:589px;top:487px;width:496px;height:22px;background:linear-gradient(#fbfbfb 0,#f4f4f4 50%,#e9e9e9 50%,#e6e6e6 100%)"></div>
<div style="position:absolute;left:1085px;top:487px;width:17px;height:23px;background:#f8f8f8"></div>
<div style="position:absolute;left:589px;top:509px;width:496px;height:1px;background:#d5d5d5"></div>
<div style="position:absolute;left:604px;top:487px;width:1px;height:22px;background:#dadada"></div>
<div style="position:absolute;left:724px;top:487px;width:1px;height:22px;background:#dadada"></div>
<div style="position:absolute;left:844px;top:487px;width:1px;height:22px;background:#dadada"></div>
<div style="position:absolute;left:964px;top:487px;width:1px;height:22px;background:#dadada"></div>
<div style="position:absolute;left:1085px;top:487px;width:1px;height:22px;background:#dadada"></div>
<div class="t" id="t78" style="left:608.36px;top:492px;transform:scaleX(0.9413);transform-origin:0 0;color:#1e1e1e">Stawka VAT</div>
<div class="t" id="t79" style="left:728.90px;top:492px;transform:scaleX(1.0093);transform-origin:0 0;color:#1e1e1e">Wartość Netto</div>
<div class="t" id="t80" style="left:849.10px;top:492px;transform:scaleX(0.9676);transform-origin:0 0;color:#1e1e1e">Wartość VAT</div>
<div class="t" id="t81" style="left:969.20px;top:492px;transform:scaleX(1.0077);transform-origin:0 0;color:#1e1e1e">Wartość Brutto</div>
<svg style="position:absolute;left:1089px;top:493px" width="12" height="11" viewBox="0 0 12 11"><path d="M1 1.5 H10 M1 3.5 H10 M1.5 1 V9 M1 8.5 H5 M5.5 1 V5.8 M9.5 1 V5.8" fill="none" stroke="#000" stroke-width="1"/><path d="M6 7 H11 L8.5 9.8 Z" fill="#000"/></svg>
<div style="position:absolute;left:589px;top:510px;width:15px;height:24px;background:linear-gradient(#f9f9f9 0,#f1f1f1 50%,#e7e7e7 50%,#e4e4e4 100%)"></div>
<div style="position:absolute;left:589px;top:535px;width:15px;height:24px;background:linear-gradient(#f9f9f9 0,#f1f1f1 50%,#e7e7e7 50%,#e4e4e4 100%)"></div>
<div style="position:absolute;left:605px;top:510px;width:119px;height:24px;background:#d1e4f6"></div>
<div style="position:absolute;left:725px;top:510px;width:360px;height:24px;background:#eaf5fd"></div>
<div style="position:absolute;left:605px;top:535px;width:119px;height:24px;background:#f2f2f2"></div>
<div style="position:absolute;left:725px;top:535px;width:360px;height:24px;background:#fff"></div>
<div style="position:absolute;left:589px;top:534px;width:496px;height:1px;background:#d5d5d5"></div>
<div style="position:absolute;left:604px;top:510px;width:1px;height:49px;background:#d5d5d5"></div>
<div style="position:absolute;left:724px;top:510px;width:1px;height:49px;background:#d5d5d5"></div>
<div style="position:absolute;left:844px;top:510px;width:1px;height:49px;background:#d5d5d5"></div>
<div style="position:absolute;left:964px;top:510px;width:1px;height:49px;background:#d5d5d5"></div>
<svg style="position:absolute;left:594px;top:517px" width="6" height="10" viewBox="0 0 6 10"><path d="M1 1 L5 5 L1 9 Z" fill="#000"/></svg>
<div class="t" id="t82" style="left:608.30px;top:516px;transform:scaleX(0.9450);transform-origin:0 0;color:#1e1e1e">23,0 A</div>
<div class="t" id="t83" style="right:291.03px;top:516px;transform:scaleX(0.9750);transform-origin:100% 0;color:#1e1e1e">29789,10</div>
<div class="t" id="t84" style="right:171.20px;top:516px;transform:scaleX(0.9450);transform-origin:100% 0;color:#1e1e1e">6851,49</div>
<div class="t" id="t85" style="right:49.31px;top:516px;transform:scaleX(0.9875);transform-origin:100% 0;color:#1e1e1e">36640,59</div>
<div class="t" id="t86" style="right:291.03px;top:541px;transform:scaleX(0.9750);transform-origin:100% 0;color:#1e1e1e">29789,10</div>
<div class="t" id="t87" style="right:171.20px;top:541px;transform:scaleX(0.9450);transform-origin:100% 0;color:#1e1e1e">6851,49</div>
<div class="t" id="t88" style="right:49.31px;top:541px;transform:scaleX(0.9875);transform-origin:100% 0;color:#1e1e1e">36640,59</div>
<div style="position:absolute;left:1085px;top:510px;width:17px;height:50px;background:linear-gradient(90deg,#e6e6e6 0,#efefef 30%,#f0f0f0 70%,#e8e8e8 100%)"></div>
<svg style="position:absolute;left:1089px;top:517px" width="9" height="6" viewBox="0 0 9 6"><path d="M0.5 5 L4.5 1 L8.5 5 Z" fill="#7d7d7d"/></svg>
<svg style="position:absolute;left:1089px;top:549px" width="9" height="6" viewBox="0 0 9 6"><path d="M0.5 1 L4.5 5 L8.5 1 Z" fill="#7d7d7d"/></svg>
<div style="position:absolute;left:859px;top:569px;transform:scaleX(1.012);transform-origin:0 0;font-size:24px;font-weight:bold;color:#000;line-height:28px;white-space:nowrap">Suma: 36640,59 PLN</div>
<div style="position:absolute;left:950px;top:618px;width:78px;height:22px;box-sizing:border-box;border:1px solid #3c7fb1;border-radius:3px;background:linear-gradient(#eaf6fd 0,#d9f0fc 50%,#bee6fd 50%,#a7d9f5 100%);box-shadow:inset 0 0 0 1px rgba(255,255,255,0.6)"></div>
<div style="position:absolute;left:1032px;top:618px;width:78px;height:22px;box-sizing:border-box;border:1px solid #707070;border-radius:3px;background:linear-gradient(#f2f2f2 0,#ebebeb 50%,#dddddd 50%,#cfcfcf 100%);box-shadow:inset 0 0 0 1px rgba(255,255,255,0.7)"></div>
<div class="t" id="t89" style="left:981.80px;top:623px;transform:scaleX(0.9533);transform-origin:0 0;color:#000">Ok</div>
<div class="t" id="t90" style="left:1054.50px;top:623px;color:#000">Anuluj</div>
</body></html>
